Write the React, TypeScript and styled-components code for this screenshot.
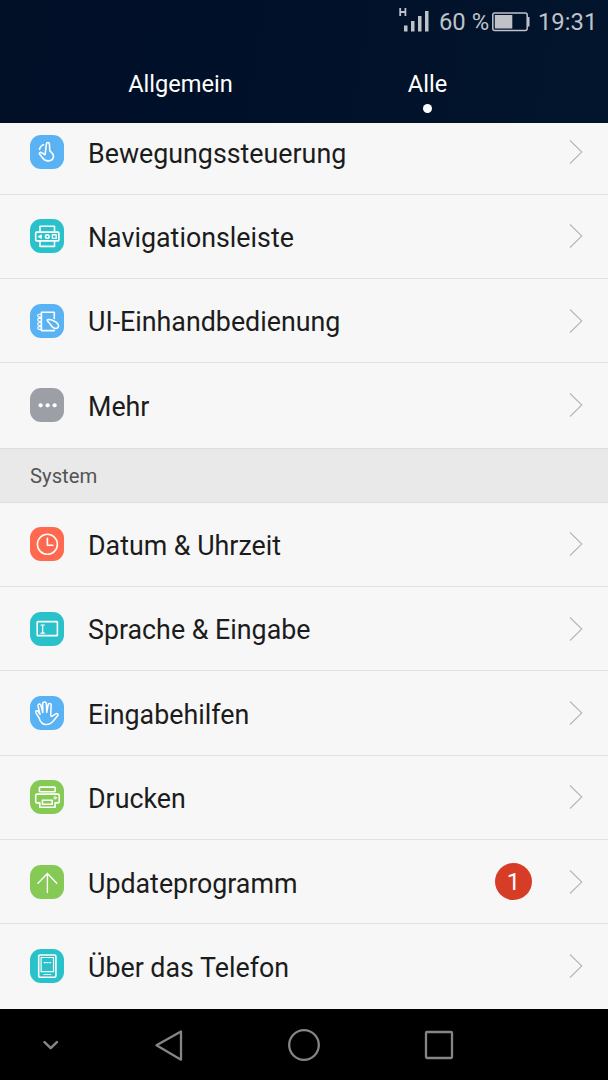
import React from 'react';
import styled, { createGlobalStyle } from 'styled-components';

const GlobalStyle = createGlobalStyle`
  * { box-sizing: border-box; }
  body { margin: 0; background: #000; font-family: Roboto, 'Liberation Sans', sans-serif; }
`;

const Screen = styled.div`
  width: 608px;
  height: 1080px;
  display: flex;
  flex-direction: column;
  overflow: hidden;
  background: #f7f7f7;
`;

const Header = styled.header`
  height: 123px;
  flex: none;
  display: flex;
  flex-direction: column;
  background: linear-gradient(100deg, #010f27 0%, #01112a 50%, #03142d 100%);
`;

const StatusBar = styled.div`
  height: 44px;
  display: flex;
  justify-content: flex-end;
  padding-right: 12px;
  color: #bfc3c8;
  font-size: 23.8px;
  line-height: 45px;
  white-space: pre;
`;

const StatusIcon = styled.svg<{ $gap: number }>`
  flex: none;
  display: block;
  margin-right: ${(p) => p.$gap}px;
`;

const StatusText = styled.span<{ $width: number }>`
  width: ${(p) => p.$width}px;
  flex: none;
`;

const Tabs = styled.nav`
  display: flex;
  padding: 0 57px;
`;

const Tab = styled.div`
  flex: 1;
  height: 79px;
  padding-top: 25px;
  display: flex;
  flex-direction: column;
  align-items: center;
  color: #fff;
  font-size: 23.6px;
  line-height: 30px;
`;

const TabDot = styled.i`
  width: 9px;
  height: 9px;
  margin-top: 4.5px;
  border-radius: 50%;
  background: #fff;
`;

const Group = styled.section<{ $height: number }>`
  height: ${(p) => p.$height}px;
  flex: none;
  display: flex;
  flex-direction: column;
  justify-content: flex-end;
  overflow: hidden;
`;

const Row = styled.div<{ $last?: boolean }>`
  height: 84.37px;
  flex: none;
  display: flex;
  align-items: center;
  padding: 0 25px 0 30px;
  border-bottom: 1px solid ${(p) => (p.$last ? 'transparent' : '#e2e2e2')};
`;

const Tile = styled.svg<{ $color: string }>`
  width: 34px;
  height: 34px;
  flex: none;
  border-radius: 11px;
  background: ${(p) => p.$color};
  fill: none;
  stroke: #fff;
  stroke-width: 1.6;
  stroke-linecap: round;
  stroke-linejoin: round;
`;

const Label = styled.span`
  flex: 1;
  padding: 3.6px 0 0 24px;
  color: #1c1c1c;
  font-size: 26.8px;
  line-height: 34px;
  white-space: nowrap;
`;

const Badge = styled.span`
  width: 37px;
  height: 37px;
  margin-right: 37px;
  border-radius: 50%;
  background: #d63c26;
  color: #fff;
  font-size: 24px;
  line-height: 38px;
  text-align: center;
`;

const SectionTitle = styled.h2`
  height: 55px;
  flex: none;
  margin: 0;
  padding: 1px 30px 0;
  border-top: 1px solid #dedede;
  border-bottom: 1px solid #dedede;
  background: #e9e9e9;
  color: #545454;
  font-size: 20.3px;
  font-weight: 400;
  line-height: 53px;
`;

const NavBar = styled.footer`
  flex: 1;
  background: #000;
`;

const Chevron = () => (
  <svg width="14" height="26" viewBox="0 0 14 26" fill="none" stroke="#b4b7b5" strokeWidth="1.1">
    <path d="M1 1.5 12.8 13 1 24.5" />
  </svg>
);

const glyphs: Record<string, React.ReactNode> = {
  motion: (
    <>
      <path d="M16.4 8.800c.3-1.800 2.800-1.700 3 0l.4 6.900c1.400 1.700 3.700 2.700 3.700 5.300 0 3.200-2.100 4.900-5.400 4.900-2.600 0-4-1-5.200-2.700l-3.400-4.300c-.6-1 .7-2 2.200-1.200l3.400 2z" />
      <path d="M9.500 14.300c.4-2.200 2-3.900 4-4.600" strokeDasharray="3.200 1.500" />
    </>
  ),
  navigation: (
    <>
      <path d="M10 12.7V7.200h14.500v5.500M10 22v5.400h14.500V22" />
      <rect x="5.700" y="13.100" width="23.200" height="8.800" rx="1" />
      <path d="M8.400 17.500l3-1.700v3.400z" fill="#fff" strokeWidth=".8" />
      <circle cx="17.300" cy="17.500" r="1.800" />
      <rect x="22.400" y="15.800" width="3.800" height="3.600" strokeWidth="1.400" />
    </>
  ),
  onehand: (
    <>
      <path d="M24.300 14.500V8.200H11.400v18.400h12.900" />
      <path d="M11 10.300H9.200c-2 0-2 2.800 0 2.800H11M11 14.400H9.200c-2 0-2 2.800 0 2.800H11M11 18.500H9.200c-2 0-2 2.800 0 2.800H11M11 22.600H9.200c-2 0-2 2.800 0 2.800H11" strokeWidth="1.100" />
      <path d="M17.500 15.700c2.600-1 8.600 1.400 10.500 4.400 1.600 2.700-.5 4.800-3.100 4.300-2.700-.5-3.600-2.800-5.200-4.800-1.100-1.400-3.200-3-2.200-3.900z" />
    </>
  ),
  more: (
    <g fill="#fff" stroke="none">
      <circle cx="10.600" cy="17.300" r="2.100" />
      <circle cx="17.600" cy="17.300" r="2.100" />
      <circle cx="24.600" cy="17.300" r="2.100" />
    </g>
  ),
  clock: (
    <>
      <circle cx="17.400" cy="17.300" r="10" />
      <path d="M17.400 11.200v7h5.400" />
    </>
  ),
  input: (
    <>
      <rect x="7.200" y="9.600" width="20.200" height="14" rx=".7" />
      <path d="M11 13h3.400M11 21.200h3.400M12.700 13v8.200" strokeWidth="1.200" />
    </>
  ),
  hand: (
    <path d="M9.200 22.200L5.800 16.600c-.6-1.800 1.600-2.600 2.400-1.100l1.900 2.900L8 10c-.4-2.200 2.400-2.700 2.900-.8l1.900 7.300-.1-8.900c0-2.300 3.500-2.300 3.700 0l.3 8.700 1.500-7.400c.4-2 3.200-1.600 3 .5L20.700 18.800c0 1.600.9 1.900 1.900 1.100l3.200-2.100c1.500-1 3.100.6 1.800 2l-4.100 4.900c-1.700 2.600-3.800 3.800-7.100 3.800-4 0-6-2.100-7.200-6.300z" strokeWidth="1.500" />
  ),
  printer: (
    <>
      <rect x="9.400" y="7.100" width="15.800" height="4.700" rx=".9" />
      <path d="M9.800 22.900H7.100c-.9 0-1.400-.5-1.400-1.400v-6c0-.9.5-1.400 1.400-1.400h20.700c.9 0 1.400.5 1.400 1.400v6c0 .9-.5 1.400-1.400 1.400h-2.700v4.400H9.800z" />
      <rect x="12.400" y="20.200" width="9.800" height="4" />
      <circle cx="25.100" cy="17.800" r="1.200" strokeWidth="1" />
    </>
  ),
  update: <path d="M17.400 27.500v-19M8 18.200l9.400-9.800 9.400 9.800" strokeWidth="1.400" />,
  phone: (
    <>
      <rect x="8.700" y="6" width="17.200" height="22.200" rx="1.300" />
      <rect x="11.100" y="8.500" width="12.400" height="14.200" strokeWidth="1.200" />
      <path d="M14.200 13.600h1.200M16.800 13.600h1.200M19.400 13.600h1.200" strokeWidth="1.200" />
      <path d="M13.800 25.500h7" strokeWidth=".9" />
    </>
  ),
};

interface Item {
  icon: string;
  color: string;
  label: string;
  badge?: number;
}

const deviceItems: Item[] = [
  { icon: 'motion', color: '#58b2f3', label: 'Bewegungssteuerung' },
  { icon: 'navigation', color: '#29c1ca', label: 'Navigationsleiste' },
  { icon: 'onehand', color: '#58b2f3', label: 'UI-Einhandbedienung' },
  { icon: 'more', color: '#9d9fa6', label: 'Mehr' },
];

const systemItems: Item[] = [
  { icon: 'clock', color: '#ff694f', label: 'Datum & Uhrzeit' },
  { icon: 'input', color: '#29c1ca', label: 'Sprache & Eingabe' },
  { icon: 'hand', color: '#58b2f3', label: 'Eingabehilfen' },
  { icon: 'printer', color: '#86ca56', label: 'Drucken' },
  { icon: 'update', color: '#86ca56', label: 'Updateprogramm', badge: 1 },
  { icon: 'phone', color: '#29c1ca', label: 'Über das Telefon' },
];

const Items = ({ items }: { items: Item[] }) => (
  <>
    {items.map((item, i) => (
      <Row key={item.label} $last={i === items.length - 1}>
        <Tile viewBox="0 0 34 34" $color={item.color}>{glyphs[item.icon]}</Tile>
        <Label>{item.label}</Label>
        {item.badge && <Badge>{item.badge}</Badge>}
        <Chevron />
      </Row>
    ))}
  </>
);

export default function App() {
  return (
    <Screen>
      <GlobalStyle />
      <Header>
        <StatusBar>
          <StatusIcon width="31" height="44" viewBox="0 0 31 44" $gap={9}>
            <path d="M1.200 8v8M6.400 8v8M1.200 12h5.200" stroke="#bfc3c8" strokeWidth="1.800" fill="none" />
            <path d="M5 25.500h3.500v6H5zM12 21h3.500v10.500H12zM19 16h3.500v15.500H19zM26 11h3.500v20.500H26z" fill="#bfc3c8" />
          </StatusIcon>
          <StatusText $width={53}>60 %</StatusText>
          <StatusIcon width="38" height="44" viewBox="0 0 38 44" $gap={8}>
            <rect x=".8" y="13" width="34.400" height="17.500" rx="2" fill="none" stroke="#bfc3c8" strokeWidth="1.500" />
            <path d="M2.800 15h17.500v13.500H2.800zM35.500 17h2v9.500h-2z" fill="#bfc3c8" />
          </StatusIcon>
          <StatusText $width={58}>19:31</StatusText>
        </StatusBar>
        <Tabs>
          <Tab>Allgemein</Tab>
          <Tab>Alle<TabDot /></Tab>
        </Tabs>
      </Header>
      <Group $height={324.6}>
        <Items items={deviceItems} />
      </Group>
      <SectionTitle>System</SectionTitle>
      <Group $height={506.2}>
        <Items items={systemItems} />
      </Group>
      <NavBar>
        <svg width="608" height="71" viewBox="0 0 608 71" fill="none" stroke="#858585" strokeWidth="2.300" strokeLinejoin="round" strokeLinecap="round">
          <path d="M44.500 33.200l6.200 6 6.200-6" strokeWidth="2.500" />
          <path d="M181 22.500v28.200L156.500 36.300z" />
          <circle cx="304" cy="36" r="14.800" />
          <rect x="426" y="23" width="26" height="26" rx="1" />
        </svg>
      </NavBar>
    </Screen>
  );
}
